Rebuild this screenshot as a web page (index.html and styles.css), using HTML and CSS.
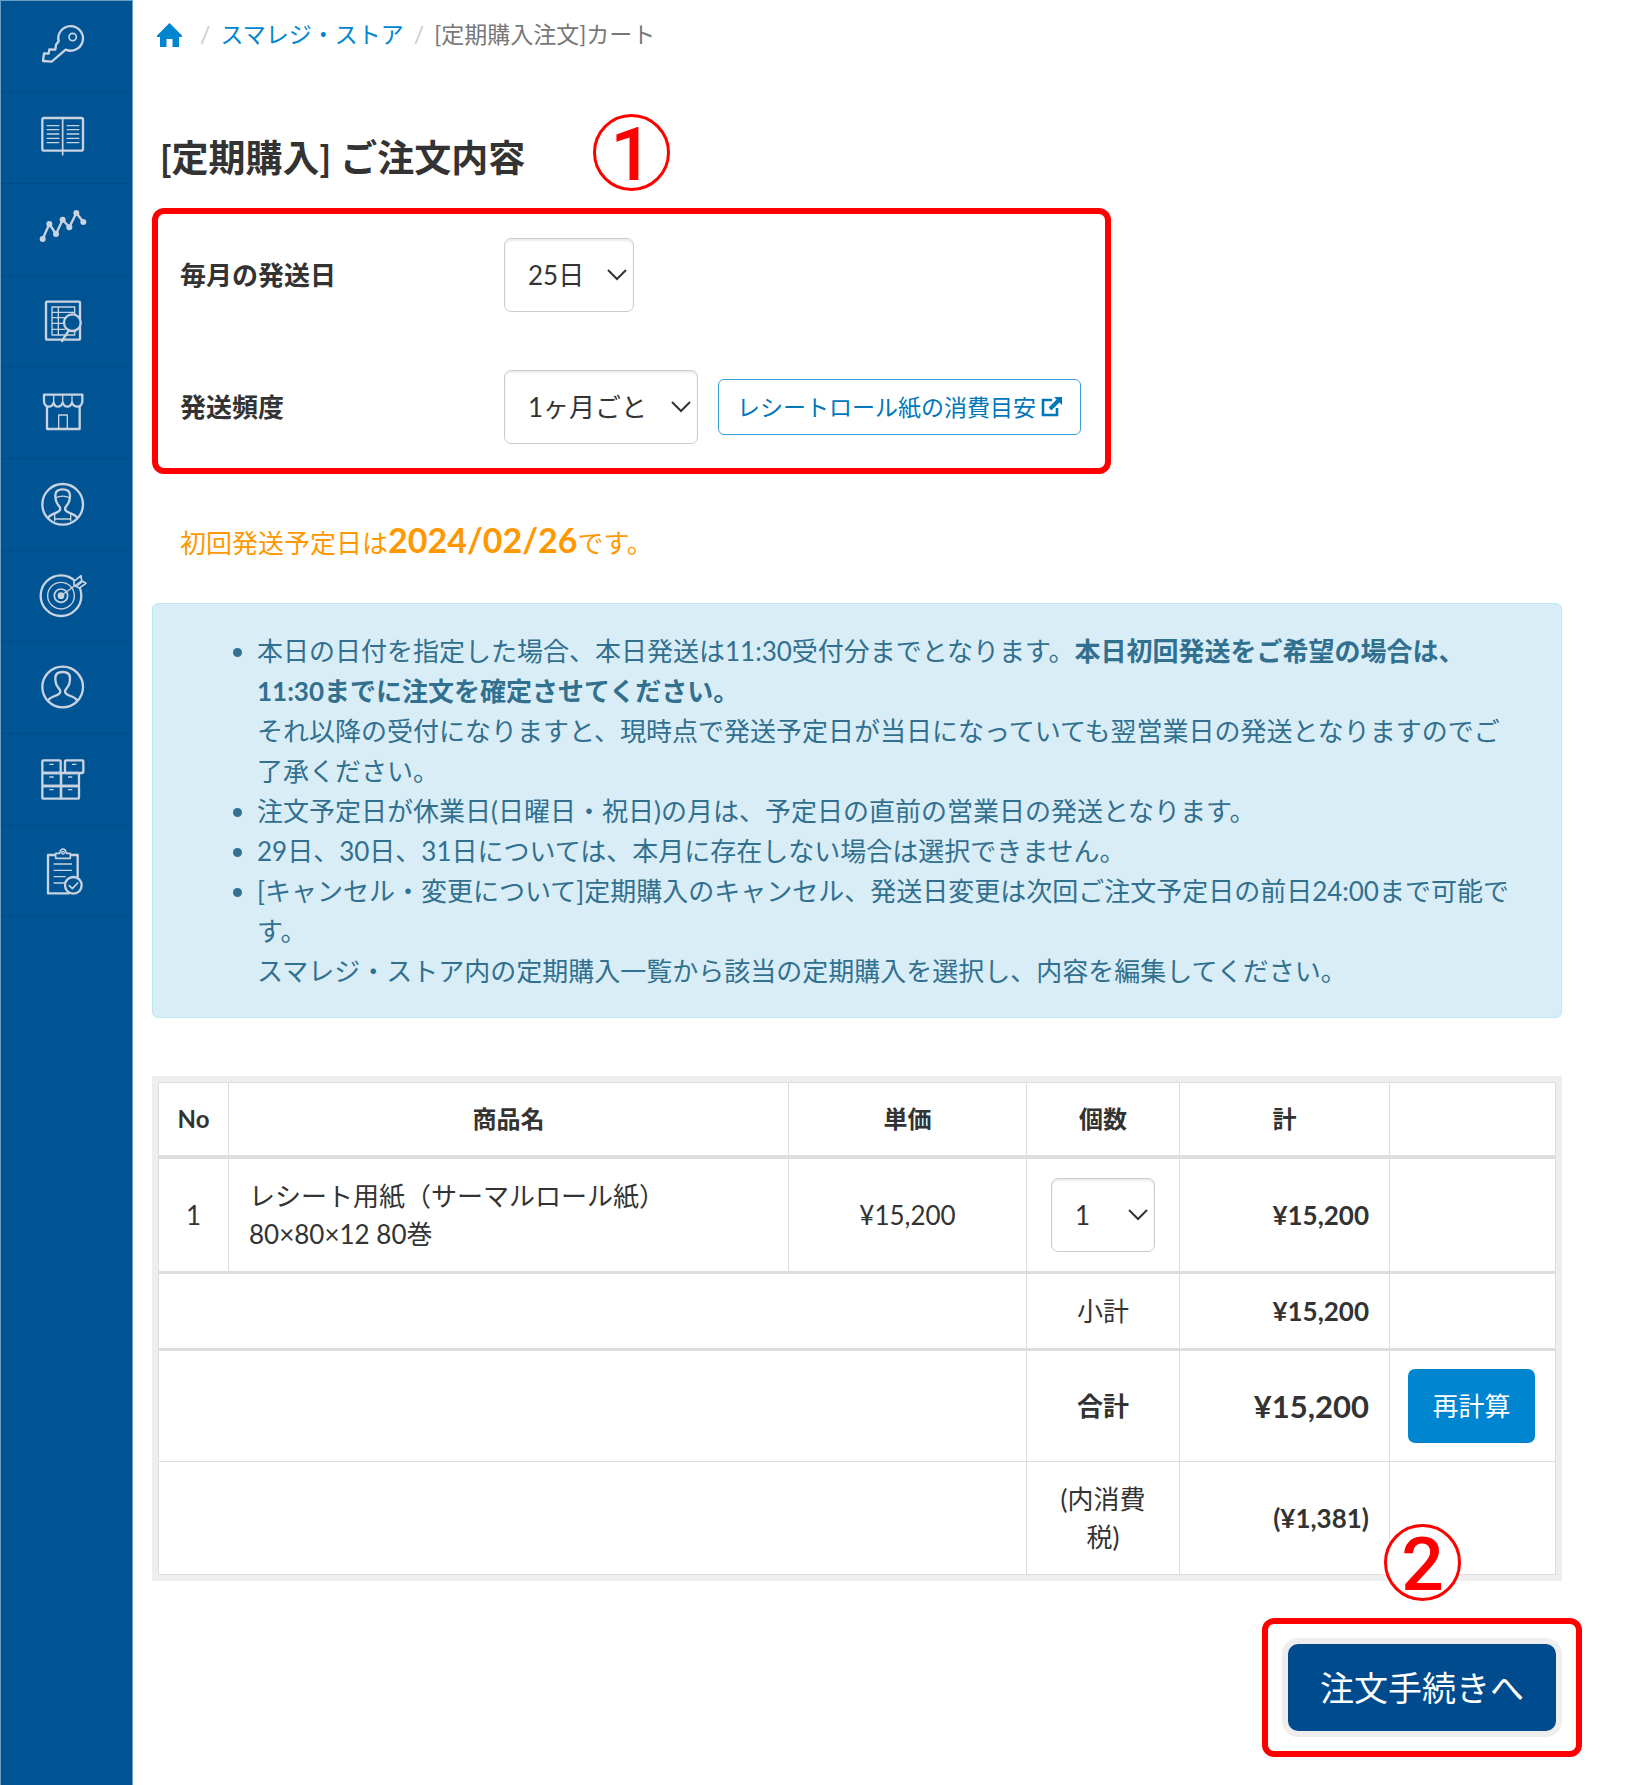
FILE: index.html
```html
<!DOCTYPE html>
<html lang="ja">
<head>
    <meta charset="UTF-8">
    <meta name="viewport" content="width=device-width, initial-scale=1.0">
    <title>[定期購入注文]カート</title>
    <link rel="stylesheet" href="styles.css">
</head>
<body>

<nav class="sidebar">
    <a href="#" aria-label="ログイン">
        <svg viewBox="0 0 150 156"><path d="M62 70l-8 10-2 15-18-1-2 13-14-1-3 23 26 2 42-36A37 37 0 1 0 62 70z"/><circle class="mid" cx="104" cy="57" r="11"/></svg>
    </a>
    <a href="#" aria-label="マニュアル">
        <svg viewBox="0 0 150 156"><rect x="13" y="27" width="122" height="98" rx="5"/><path class="mid" d="M74 28v110"/><path class="thin" d="M26 50h38M26 62h38M26 75h38M26 88h38M26 101h38M86 50h38M86 62h38M86 75h38M86 88h38M86 101h38"/></svg>
    </a>
    <a href="#" aria-label="売上分析">
        <svg viewBox="0 0 150 156"><path d="M14 114l20-45 20 30 20-43 20 23 21-43 21 27"/><g class="solid"><circle cx="14" cy="114" r="9"/><circle cx="34" cy="69" r="9"/><circle cx="54" cy="99" r="9"/><circle cx="74" cy="56" r="9"/><circle cx="94" cy="79" r="9"/><circle cx="115" cy="36" r="9"/><circle cx="136" cy="63" r="9"/></g></svg>
    </a>
    <a href="#" aria-label="取引履歴">
        <svg viewBox="0 0 150 156"><rect x="24" y="26" width="102" height="114" rx="3"/><path class="thin" d="M42 42h68v84H42zM61 42v84M42 58h68M42 74h40M42 91h36M42 109h40"/><circle class="cover" cx="103" cy="89" r="25"/><path d="M92 113l-20 31"/></svg>
    </a>
    <a href="#" aria-label="店舗">
        <svg viewBox="0 0 150 156"><path d="M18 32h115v21q-2 15-15 15-12 0-16-12-4 12-14 12T74 56q-4 12-14 12T47 56q-4 12-14 12-13 0-15-15zM27 68v67h98V68"/><path class="thin" d="M47 33v22M74 33v22M102 33v22M62 133V93h26v40"/></svg>
    </a>
    <a href="#" aria-label="スタッフ">
        <svg viewBox="0 0 150 156"><circle cx="74" cy="85" r="61"/><path d="M31 124c8-12 30-12 35-22 3-6-1-10-6-16-7-8-8-14-8-28 0-14 8-18 22-18s22 4 22 18c0 14-1 20-8 28-5 6-9 10-6 16 5 10 27 10 35 22"/><path class="thin" d="M52 66q22-11 44 0M50 112v24M98 112v24M50 129h48"/></svg>
    </a>
    <a href="#" aria-label="販売促進">
        <svg viewBox="0 0 150 156"><circle cx="69" cy="83" r="61"/><circle class="thin" cx="69" cy="83" r="40"/><circle class="mid" cx="69" cy="83" r="20"/><circle class="solid" cx="69" cy="83" r="10"/><path class="cover mid" d="M108 52V40l21-17 2 15 13 8-20 14z"/><path class="thin" d="M69 83l62-45M114 56l18-14"/></svg>
    </a>
    <a href="#" aria-label="会員">
        <svg viewBox="0 0 150 156"><circle cx="74" cy="84" r="61"/><path d="M31 123c8-12 30-12 35-22 3-6-1-10-6-16-7-8-8-14-8-28 0-14 8-18 22-18s22 4 22 18c0 14-1 20-8 28-5 6-9 10-6 16 5 10 27 10 35 22"/></svg>
    </a>
    <a href="#" aria-label="在庫">
        <svg viewBox="0 0 150 156"><rect x="13" y="28" width="55" height="38" rx="3"/><rect x="81" y="28" width="55" height="38" rx="3"/><rect x="13" y="66" width="56" height="39" rx="3"/><rect x="69" y="66" width="54" height="39" rx="3"/><rect x="13" y="105" width="56" height="38" rx="3"/><rect x="69" y="105" width="54" height="38" rx="3"/><path class="thin" d="M34 40h13M102 40h13M34 78h13M90 78h13M34 116h13M90 116h13"/></svg>
    </a>
    <a href="#" aria-label="発注">
        <svg viewBox="0 0 150 156"><path d="M50 36H30v115h62M100 36h19v66"/><path class="mid" d="M53 46V31h12q2-13 10-13t10 13h12v15z"/><circle class="thin" cx="75" cy="29" r="4"/><path class="thin" d="M47 63h55M47 82h55M47 101h36M47 120h32"/><circle class="cover" cx="106" cy="127" r="25"/><path class="mid" d="M94 128l9 9 16-17"/></svg>
    </a>
</nav>

<main>
    <ol class="breadcrumb">
        <li>
            <a href="#" aria-label="ホーム"><svg class="home" viewBox="0 0 25 24"><path d="M12.500 0 25 12.500V14h-3v10h-6.500v-8h-6v8H3V14H0v-1.500z"/></svg></a>
        </li>
        <li><a href="#">スマレジ・ストア</a></li>
        <li>[定期購入注文]カート</li>
    </ol>

    <h1>[定期購入] ご注文内容</h1>

    <section class="marked delivery">
        <span class="badge">1</span>
        <label for="ship-day">毎月の発送日</label>
        <div class="field">
            <select id="ship-day" class="day">
                <option>25日</option>
            </select>
        </div>
        <label for="frequency">発送頻度</label>
        <div class="field">
            <select id="frequency" class="frequency">
                <option>1ヶ月ごと</option>
            </select>
            <a href="#" class="btn-outline">レシートロール紙の消費目安<svg viewBox="0 0 21 20"><path d="M11 3H2v15h14v-7" fill="none" stroke="currentColor" stroke-width="2.600"/><path d="M13 0h8v8l-2.600-2.600-8 8-2.800-2.800 8-8z" fill="currentColor"/></svg></a>
        </div>
    </section>

    <p class="first-date">初回発送予定日は<strong>2024/02/26</strong>です。</p>

    <div class="alert">
        <ul>
            <li>本日の日付を指定した場合、本日発送は11:30受付分までとなります。<strong>本日初回発送をご希望の場合は、<br>11:30までに注文を確定させてください。</strong><br>それ以降の受付になりますと、現時点で発送予定日が当日になっていても翌営業日の発送となりますのでご了承ください。</li>
            <li>注文予定日が休業日(日曜日・祝日)の月は、予定日の直前の営業日の発送となります。</li>
            <li>29日、30日、31日については、本月に存在しない場合は選択できません。</li>
            <li>[キャンセル・変更について]定期購入のキャンセル、発送日変更は次回ご注文予定日の前日24:00まで可能です。<br>スマレジ・ストア内の定期購入一覧から該当の定期購入を選択し、内容を編集してください。</li>
        </ul>
    </div>

    <div class="cart">
        <table>
            <colgroup>
                <col class="col-no">
                <col>
                <col class="col-price">
                <col class="col-count">
                <col class="col-total">
                <col class="col-action">
            </colgroup>
            <thead>
                <tr>
                    <th>No</th>
                    <th>商品名</th>
                    <th>単価</th>
                    <th>個数</th>
                    <th>計</th>
                    <th></th>
                </tr>
            </thead>
            <tbody>
                <tr class="thick">
                    <td>1</td>
                    <td class="name">レシート用紙（サーマルロール紙）<br>80×80×12 80巻</td>
                    <td>¥15,200</td>
                    <td>
                        <select class="count" aria-label="個数">
                            <option>1</option>
                        </select>
                    </td>
                    <td class="money">¥15,200</td>
                    <td></td>
                </tr>
                <tr class="thick">
                    <td colspan="3"></td>
                    <td>小計</td>
                    <td class="money">¥15,200</td>
                    <td></td>
                </tr>
                <tr>
                    <td colspan="3"></td>
                    <td><strong>合計</strong></td>
                    <td class="money large">¥15,200</td>
                    <td><button type="button" class="btn-recalc">再計算</button></td>
                </tr>
                <tr>
                    <td colspan="3"></td>
                    <td>(内消費税)</td>
                    <td class="money">(¥1,381)</td>
                    <td></td>
                </tr>
            </tbody>
        </table>
    </div>

    <div class="marked order">
        <span class="badge">2</span>
        <button type="submit" class="btn-order">注文手続きへ</button>
    </div>
</main>

</body>
</html>
```

FILE: styles.css
```css
* {
    box-sizing: border-box;
}

body {
    display: flex;
    min-height: 100vh;
    margin: 0;
    font-family: Lato, "Noto Sans CJK JP", sans-serif;
    font-size: 26px;
    line-height: 38px;
    color: #333;
    background-color: #fff;
}

a {
    color: #0085d0;
    text-decoration: none;
}

/* サイドバー */
.sidebar {
    flex: 0 0 133px;
    display: grid;
    grid-auto-rows: 91px 92px 92px;
    align-content: start;
    background-color: #005493;
    border: 1px solid #6b9cc3;
    border-bottom: 0;
}

.sidebar a {
    padding: 17px 0 0 37px;
    border-bottom: 1px solid #004a85;
}

.sidebar svg {
    display: block;
    width: 50px;
    height: 52px;
    fill: none;
    stroke: #c9d3e2;
    stroke-width: 7;
    stroke-linejoin: round;
    stroke-linecap: round;
}

.sidebar .mid {
    stroke-width: 5;
}

.sidebar .thin {
    stroke-width: 4;
    stroke-linecap: butt;
}

.sidebar .solid {
    fill: #c9d3e2;
    stroke: none;
}

.sidebar .cover {
    fill: #005493;
}

main {
    flex: 1;
    min-width: 0;
    padding: 17px 65px 26px 19px;
}

.breadcrumb {
    display: flex;
    margin: 0 0 85px;
    padding: 0 0 0 5px;
    list-style: none;
    font-size: 23px;
    line-height: 34px;
    color: #777;
}

.breadcrumb li + li::before {
    content: "/";
    padding: 0 10px;
    color: #ccc;
}

.home {
    display: inline-block;
    width: 25px;
    height: 24px;
    margin-right: 8px;
    fill: #0085d0;
    vertical-align: -4px;
}

h1 {
    margin: 0 0 28px;
    padding-left: 8px;
    font-size: 37px;
    line-height: 44px;
}

/* 赤枠と番号 */
.marked {
    position: relative;
    width: fit-content;
    border: 6px solid #f00;
    border-radius: 12px;
}

.badge {
    position: absolute;
    top: -100px;
    width: 77px;
    height: 77px;
    border: 3px solid #f00;
    border-radius: 50%;
    background-color: rgba(255, 255, 255, 0.9);
    box-shadow: 0 0 8px #fff;
    font-family: Roboto, sans-serif;
    font-size: 75px;
    font-weight: 500;
    line-height: 74px;
    text-align: center;
    color: #f00;
}

.delivery {
    display: grid;
    grid-template-columns: 324px auto;
    row-gap: 58px;
    align-items: center;
    padding: 24px 24px 24px 22px;
}

.delivery .badge {
    left: 435px;
}

.delivery label {
    font-weight: bold;
}

.field {
    display: flex;
    align-items: center;
    gap: 20px;
}

select {
    appearance: none;
    height: 74px;
    padding: 0 23px;
    border: 1px solid #ccc;
    border-radius: 7px;
    background: #fff url("data:image/svg+xml,%3Csvg xmlns='http://www.w3.org/2000/svg' width='20' height='12'%3E%3Cpath d='M1 1l9 9 9-9' fill='none' stroke='%23333' stroke-width='2'/%3E%3C/svg%3E") no-repeat right 6px center;
    box-shadow: inset 0 2px 2px rgba(0, 0, 0, 0.08);
    font: inherit;
    color: #333;
}

.day {
    width: 130px;
}

.frequency {
    width: 194px;
}

.count {
    display: block;
    width: 104px;
    margin: 0 auto;
}

.btn-outline {
    display: flex;
    align-items: center;
    gap: 5px;
    height: 56px;
    padding: 0 18px;
    border: 1px solid #3d9fd9;
    border-radius: 6px;
    font-size: 23px;
    color: #0076bb;
}

.btn-outline svg {
    width: 21px;
    height: 20px;
}

.first-date {
    margin: 38px 0 32px;
    padding-left: 28px;
    line-height: 56px;
    color: #ff9800;
}

.first-date strong {
    font-size: 34px;
}

.alert {
    padding: 27px 42px 26px 104px;
    border: 1px solid #bce8f1;
    border-radius: 6px;
    background-color: #d9edf7;
    line-height: 40px;
    color: #31708f;
}

.alert ul {
    margin: 0;
    padding: 0;
}

/* カート */
.cart {
    margin: 58px 0 37px;
    border: 6px solid #eee;
}

table {
    width: 100%;
    table-layout: fixed;
    border-collapse: collapse;
}

.col-no {
    width: 70px;
}

.col-price {
    width: 238px;
}

.col-count {
    width: 153px;
}

.col-total {
    width: 210px;
}

.col-action {
    width: 166px;
}

th, td {
    padding: 18px;
    border: 1px solid #ddd;
    text-align: center;
}

th {
    border-bottom-width: 4px;
    font-size: 24px;
    line-height: 36px;
}

.thick td {
    border-bottom-width: 3px;
}

.name {
    text-align: left;
    padding-left: 20px;
}

.money {
    padding-right: 20px;
    font-weight: bold;
    text-align: right;
}

.large {
    font-size: 31px;
}

button {
    border: 0;
    font: inherit;
    color: #fff;
    cursor: pointer;
}

.btn-recalc {
    display: block;
    width: 127px;
    height: 74px;
    border-radius: 7px;
    background-color: #0085d0;
}

.order {
    margin: 0 -20px 0 auto;
    padding: 20px;
}

.order .badge {
    left: 116px;
}

.btn-order {
    display: block;
    width: 268px;
    height: 87px;
    border-radius: 10px;
    background-color: #004b8d;
    box-shadow: 0 0 0 6px #eee;
    font-size: 34px;
}
```
